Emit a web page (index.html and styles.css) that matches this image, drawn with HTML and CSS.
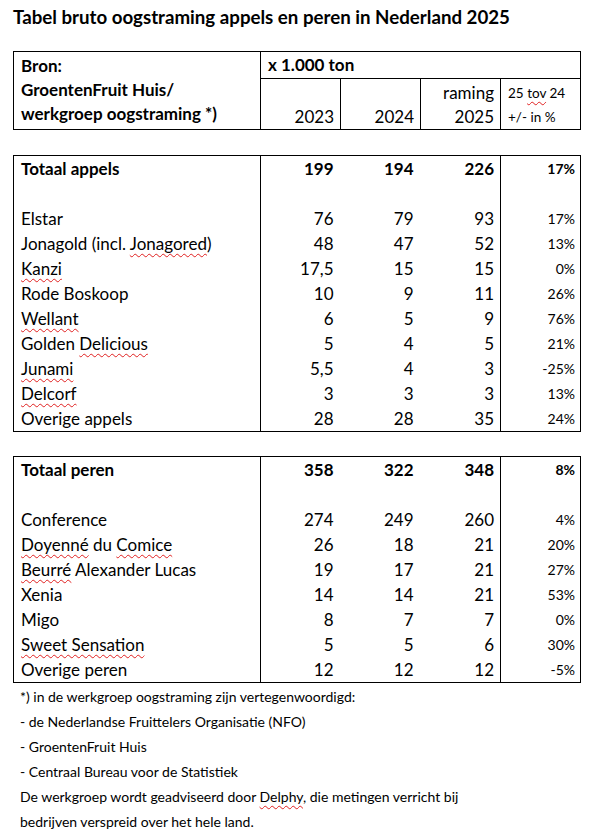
FILE: index.html
```html
<!DOCTYPE html>
<html lang="nl">
<head>
<meta charset="utf-8">
<title>Tabel bruto oogstraming appels en peren in Nederland 2025</title>
<link rel="stylesheet" href="styles.css">
</head>
<body>
<div class="page">
  <h1 class="title">Tabel bruto oogstraming appels en peren in Nederland 2025</h1>

  <table class="grid hdr">
    <colgroup><col class="c-name"><col class="c-num"><col class="c-num"><col class="c-num"><col class="c-num"></colgroup>
    <tr class="r1">
      <td class="src" rowspan="2"><div>Bron:</div><div>GroentenFruit Huis/</div><div>werkgroep oogstraming *)</div></td>
      <td class="unit" colspan="4">x 1.000 ton</td>
    </tr>
    <tr class="r2">
      <td class="yr"><div>&nbsp;</div><div>2023</div></td>
      <td class="yr"><div>&nbsp;</div><div>2024</div></td>
      <td class="yr"><div>raming</div><div>2025</div></td>
      <td class="cmp"><div>25 <span class="sp">tov</span> 24</div><div>+/- in %</div></td>
    </tr>
  </table>

  <table class="grid data">
    <colgroup><col class="c-name"><col class="c-num"><col class="c-num"><col class="c-num"><col class="c-num"></colgroup>
    <tr class="total"><td class="name">Totaal appels</td><td class="n">199</td><td class="n">194</td><td class="n last">226</td><td class="p">17%</td></tr>
    <tr><td class="name"></td><td class="n"></td><td class="n"></td><td class="n last"></td><td class="p"></td></tr>
    <tr><td class="name">Elstar</td><td class="n">76</td><td class="n">79</td><td class="n last">93</td><td class="p">17%</td></tr>
    <tr><td class="name">Jonagold (incl. <span class="sp">Jonagored</span>)</td><td class="n">48</td><td class="n">47</td><td class="n last">52</td><td class="p">13%</td></tr>
    <tr><td class="name"><span class="sp">Kanzi</span></td><td class="n">17,5</td><td class="n">15</td><td class="n last">15</td><td class="p">0%</td></tr>
    <tr><td class="name">Rode Boskoop</td><td class="n">10</td><td class="n">9</td><td class="n last">11</td><td class="p">26%</td></tr>
    <tr><td class="name"><span class="sp">Wellant</span></td><td class="n">6</td><td class="n">5</td><td class="n last">9</td><td class="p">76%</td></tr>
    <tr><td class="name">Golden <span class="sp">Delicious</span></td><td class="n">5</td><td class="n">4</td><td class="n last">5</td><td class="p">21%</td></tr>
    <tr><td class="name"><span class="sp">Junami</span></td><td class="n">5,5</td><td class="n">4</td><td class="n last">3</td><td class="p">-25%</td></tr>
    <tr><td class="name"><span class="sp">Delcorf</span></td><td class="n">3</td><td class="n">3</td><td class="n last">3</td><td class="p">13%</td></tr>
    <tr><td class="name">Overige appels</td><td class="n">28</td><td class="n">28</td><td class="n last">35</td><td class="p">24%</td></tr>
  </table>

  <table class="grid data">
    <colgroup><col class="c-name"><col class="c-num"><col class="c-num"><col class="c-num"><col class="c-num"></colgroup>
    <tr class="total"><td class="name">Totaal peren</td><td class="n">358</td><td class="n">322</td><td class="n last">348</td><td class="p">8%</td></tr>
    <tr><td class="name"></td><td class="n"></td><td class="n"></td><td class="n last"></td><td class="p"></td></tr>
    <tr><td class="name">Conference</td><td class="n">274</td><td class="n">249</td><td class="n last">260</td><td class="p">4%</td></tr>
    <tr><td class="name"><span class="sp">Doyenné</span> du <span class="sp">Comice</span></td><td class="n">26</td><td class="n">18</td><td class="n last">21</td><td class="p">20%</td></tr>
    <tr><td class="name"><span class="sp">Beurré</span> Alexander Lucas</td><td class="n">19</td><td class="n">17</td><td class="n last">21</td><td class="p">27%</td></tr>
    <tr><td class="name">Xenia</td><td class="n">14</td><td class="n">14</td><td class="n last">21</td><td class="p">53%</td></tr>
    <tr><td class="name">Migo</td><td class="n">8</td><td class="n">7</td><td class="n last">7</td><td class="p">0%</td></tr>
    <tr><td class="name"><span class="sp">Sweet Sensation</span></td><td class="n">5</td><td class="n">5</td><td class="n last">6</td><td class="p">30%</td></tr>
    <tr><td class="name">Overige peren</td><td class="n">12</td><td class="n">12</td><td class="n last">12</td><td class="p">-5%</td></tr>
  </table>

  <div class="notes">
    <p>*) in de werkgroep oogstraming zijn vertegenwoordigd:</p>
    <p>- de Nederlandse Fruittelers Organisatie (NFO)</p>
    <p>- GroentenFruit Huis</p>
    <p>- Centraal Bureau voor de Statistiek</p>
    <p>De werkgroep wordt geadviseerd door <span class="sp">Delphy</span>, die metingen verricht bij</p>
    <p>bedrijven verspreid over het hele land.</p>
  </div>
</div>
</body>
</html>
```

FILE: styles.css
```css
html, body {
  margin: 0;
  padding: 0;
  background: #ffffff;
}

body {
  font-family: Lato, "Liberation Sans", sans-serif;
  color: #000000;
  font-size: 17px;
}

.page {
  padding-left: 13px;
}

.title {
  margin: 0 0 22px 0;
  padding-top: 5px;
  font-size: 18.7px;
  line-height: 24px;
  font-weight: 700;
}

.grid {
  width: 568px;
  table-layout: fixed;
  border-collapse: collapse;
  border: 1px solid #000;
}

.c-name { width: 247px; }
.c-num { width: 80px; }

.grid td {
  padding: 0;
  font-size: 17px;
  line-height: 25px;
  height: 25px;
  white-space: nowrap;
  overflow: visible;
}

/* header table */
.hdr td { border: 1px solid #000; }
.hdr .src {
  padding: 2px 7px 0 7px;
  line-height: 24px;
  font-weight: 700;
  vertical-align: top;
}
.hdr .unit {
  padding: 1px 7px 0 7px;
  line-height: 24px;
  font-weight: 700;
  vertical-align: top;
}
.hdr .r2 td {
  padding-top: 2px;
  line-height: 24px;
  vertical-align: top;
  height: 48px;
}
.hdr .yr {
  text-align: right;
  padding-right: 6px;
}
.hdr .cmp {
  padding-left: 7px;
  font-size: 13.5px;
}

/* data tables */
.data {
  margin-top: 25px;
}
.data + .data {
  margin-top: 24px;
}
.data td { border: 0; }
.data .name {
  padding-left: 7px;
  border-right: 1px solid #000;
}
.data .n {
  text-align: right;
  padding-right: 7px;
}
.data .last {
  padding-right: 6px;
  border-right: 1px solid #000;
}
.data .p {
  text-align: right;
  padding-right: 5px;
  font-size: 14px;
}
.data .total td {
  font-weight: 700;
}

.sp {
  text-decoration: underline wavy #e02020;
  text-decoration-thickness: 1px;
  text-underline-offset: 3px;
  text-decoration-skip-ink: none;
}

.notes {
  padding: 1px 0 0 7px;
}
.notes p {
  margin: 0;
  font-size: 14px;
  line-height: 25px;
}
```
